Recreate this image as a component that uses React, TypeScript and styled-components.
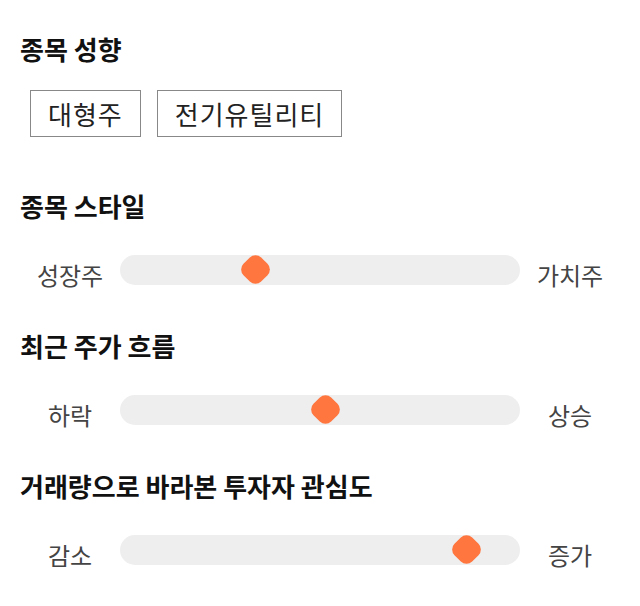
import styled, { createGlobalStyle } from 'styled-components';

const GlobalStyle = createGlobalStyle`
  body {
    margin: 0;
    background: #ffffff;
    font-family: 'Noto Sans CJK KR', 'Noto Sans', sans-serif;
  }
`;

const tags = ['대형주', '전기유틸리티'];

const sliders = [
  { title: '종목 스타일', left: '성장주', right: '가치주', value: 33.75 },
  { title: '최근 주가 흐름', left: '하락', right: '상승', value: 51.25 },
  { title: '거래량으로 바라본 투자자 관심도', left: '감소', right: '증가', value: 86.5 },
];

function App() {
  return (
    <>
      <GlobalStyle />
      <Page>
        <Section>
          <Heading>종목 성향</Heading>
          <TagList>
            {tags.map((tag) => (
              <Tag key={tag}>{tag}</Tag>
            ))}
          </TagList>
        </Section>

        {sliders.map((item) => (
          <Section key={item.title}>
            <Heading>{item.title}</Heading>
            <SliderRow>
              <EndLabel>{item.left}</EndLabel>
              <Track>
                <Thumb style={{ left: `${item.value}%` }} />
              </Track>
              <EndLabel>{item.right}</EndLabel>
            </SliderRow>
          </Section>
        ))}
      </Page>
    </>
  );
}

export default App;

const Page = styled.div`
  display: flex;
  flex-direction: column;
  gap: 39px;
  width: 600px;
  padding: 31px 20px;
`;

const Section = styled.section`
  display: flex;
  flex-direction: column;
`;

const Heading = styled.h2`
  margin: 0;
  font-size: 26px;
  font-weight: 700;
  line-height: 36px;
  color: #111111;
`;

const TagList = styled.div`
  display: flex;
  gap: 16px;
  margin: 23px 0 12px 10px;
`;

const Tag = styled.div`
  box-sizing: border-box;
  height: 47px;
  padding: 0 17px;
  border: 1px solid #888888;
  font-size: 26px;
  letter-spacing: 1px;
  line-height: 45px;
  color: #222222;
`;

const SliderRow = styled.div`
  display: grid;
  grid-template-columns: 100px 1fr 100px;
  align-items: center;
  height: 40px;
  margin-top: 25px;
`;

const EndLabel = styled.span`
  padding-top: 11px;
  text-align: center;
  font-size: 24px;
  line-height: 30px;
  color: #444444;
`;

const Track = styled.div`
  position: relative;
  height: 30px;
  border-radius: 15px;
  background: #eeeeee;
`;

const Thumb = styled.div`
  position: absolute;
  top: 2.5px;
  width: 25px;
  height: 25px;
  margin-left: -12.5px;
  border-radius: 8px;
  background: #ff763f;
  transform: rotate(45deg);
`;
